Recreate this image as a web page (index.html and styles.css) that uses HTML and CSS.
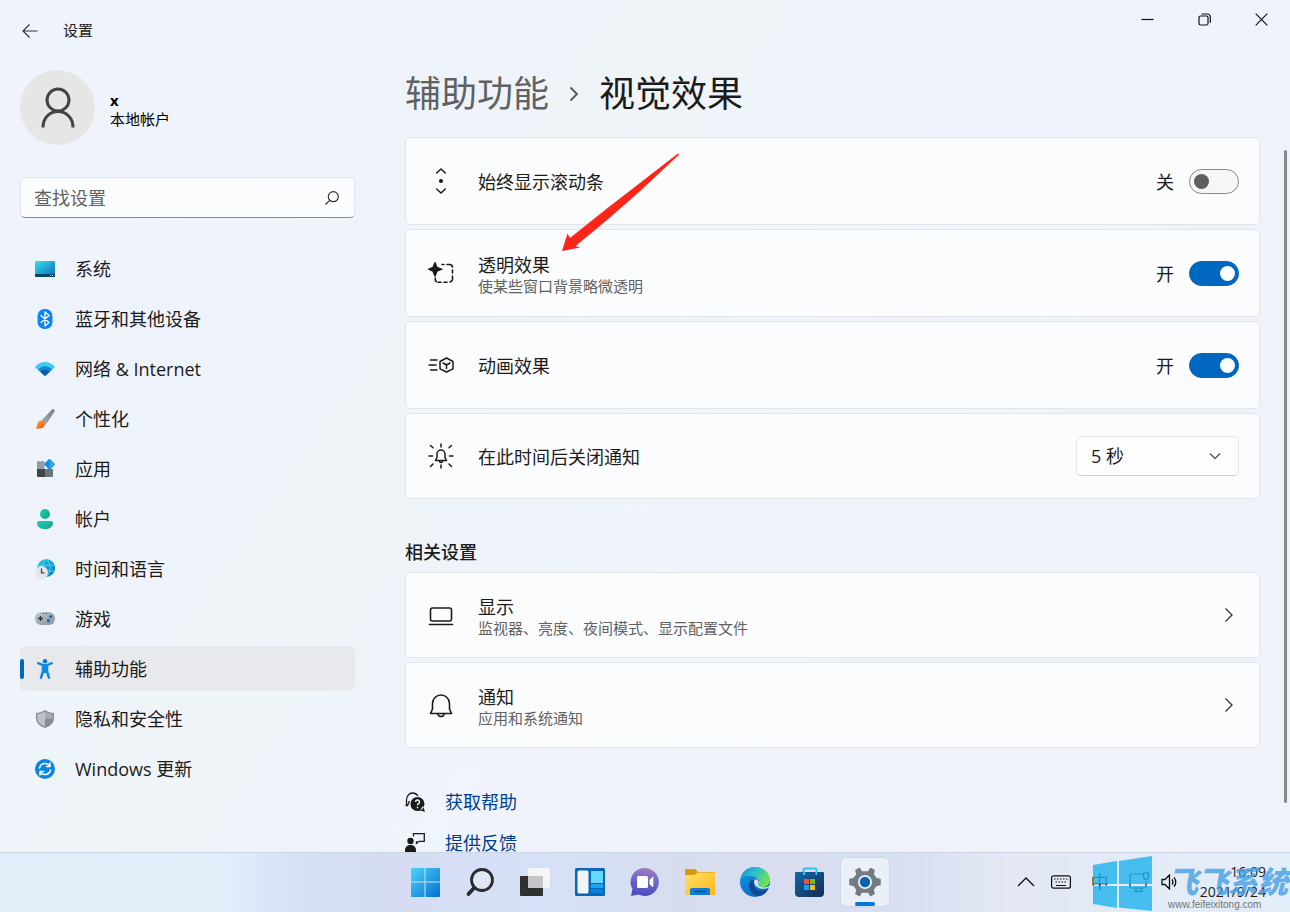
FILE: index.html
```html
<!DOCTYPE html>
<html lang="zh-CN">
<head>
    <meta charset="UTF-8">
    <meta name="viewport" content="width=device-width, initial-scale=1">
    <title>设置</title>
    <link rel="stylesheet" href="styles.css">
</head>
<body>
    <div class="window">
        <header class="titlebar">
            <button class="back-button" aria-label="返回">
                <svg width="16" height="16" viewBox="0 0 16 16" fill="none" stroke="#333" stroke-width="1.2"><path d="M15.500 8H1M7.500 1.500L1 8l6.500 6.500"/></svg>
            </button>
            <span class="app-title">设置</span>
            <div class="window-buttons">
                <button aria-label="最小化"><svg width="13" height="13" viewBox="0 0 13 13" fill="none" stroke="#111" stroke-width="1.2"><path d="M0.500 6.500h12"/></svg></button>
                <button aria-label="还原"><svg width="13" height="13" viewBox="0 0 13 13" fill="none" stroke="#111" stroke-width="1.2"><rect x="1" y="3" width="9" height="9" rx="1.500"/><path d="M3.500 1h6a2.800 2.800 0 0 1 2.800 2.800v6"/></svg></button>
                <button aria-label="关闭"><svg width="13" height="13" viewBox="0 0 13 13" stroke="#111" stroke-width="1.2"><path d="M0.700 0.700l11.600 11.600M12.300 0.700L0.700 12.300"/></svg></button>
            </div>
        </header>

        <div class="content">
            <aside class="sidebar">
                <div class="account">
                    <div class="avatar">
                        <svg width="36" height="42" viewBox="0 0 36 42" fill="none" stroke="#444" stroke-width="3"><circle cx="18" cy="13" r="11"/><path d="M3 40.500c0-9.500 6.500-16 15-16s15 6.500 15 16"/></svg>
                    </div>
                    <div class="account-text">
                        <div class="account-name">x</div>
                        <div>本地帐户</div>
                    </div>
                </div>

                <div class="search">
                    <input type="text" placeholder="查找设置" aria-label="查找设置">
                    <svg width="14" height="14" viewBox="0 0 14 14" fill="none" stroke="#333" stroke-width="1.200"><circle cx="8.300" cy="5.700" r="5"/><path d="M4.700 9.300L0.500 13.500"/></svg>
                </div>

                <nav class="nav">
                    <a href="#">
                        <svg width="20" height="20" viewBox="0 0 20 20"><defs><linearGradient id="sys" x2="1" y2="1"><stop stop-color="#3be1e6"/><stop offset="1" stop-color="#0a68c0"/></linearGradient></defs><rect y="2" width="20" height="16" rx="1.200" fill="url(#sys)"/><path d="M0 15h20v1.800a1.200 1.200 0 0 1-1.200 1.200H1.200A1.200 1.200 0 0 1 0 16.800z" fill="#0b4563"/><path d="M15 16.500h1M17 16.500h1" stroke="#bfe5f2"/></svg>
                        系统
                    </a>
                    <a href="#">
                        <svg width="20" height="20" viewBox="0 0 20 20"><rect x="2.500" width="15" height="20" rx="7" fill="#0a84ff"/><path d="M6 6.500l8 7-4 3.500V3l4 3.500-8 7" fill="none" stroke="#fff" stroke-width="1.300" stroke-linejoin="round" stroke-linecap="round"/></svg>
                        蓝牙和其他设备
                    </a>
                    <a href="#">
                        <svg width="20" height="20" viewBox="0 0 20 20"><path d="M0 8.200C5 1.400 15 1.400 20 8.200L10 17z" fill="#3dcbf2"/><path d="M3 10.700c3.500-4.500 10.500-4.500 14 0L10 17z" fill="#1787d4"/><path d="M5.500 13c2.200-3 6.800-3 9 0L10 17z" fill="#0c56a5"/></svg>
                        网络 &amp; Internet
                    </a>
                    <a href="#">
                        <svg width="20" height="20" viewBox="0 0 20 20"><defs><linearGradient id="brush" x1="1" x2="0" y2="1"><stop stop-color="#727b84"/><stop offset="1" stop-color="#a9b0b7"/></linearGradient><linearGradient id="tip" x2="1" y2="1"><stop stop-color="#ffb42e"/><stop offset="1" stop-color="#e8480c"/></linearGradient></defs><path d="M17 0.600c1.500-1 3.300.3 2.500 2L11 15.500 6.500 11.500z" fill="url(#brush)"/><path d="M6.300 11.400c2.300 0 3.900 1.800 3.600 4.200C9.500 18.600 6 20.600 0 19.300c2.100-.8 2-2 2.200-3.700.3-2.500 1.800-4.200 4.100-4.200z" fill="url(#tip)"/></svg>
                        个性化
                    </a>
                    <a href="#">
                        <svg width="20" height="20" viewBox="0 0 20 20"><path d="M2 2.200h7.500V10H2z" fill="#949ba4"/><path d="M2 10h8v8H3a1 1 0 0 1-1-1z" fill="#414549"/><path d="M10 10h8v7a1 1 0 0 1-1 1h-7z" fill="#70757a"/><rect x="10.500" y="1.200" width="8" height="8" rx="1" transform="rotate(45 14.500 5.200)" fill="#168bdd"/><path d="M14.500 0.200l4.700 4.700-5 5z" fill="#28a8ed"/></svg>
                        应用
                    </a>
                    <a href="#">
                        <svg width="20" height="20" viewBox="0 0 20 20"><defs><linearGradient id="acc" x2="1" y2="1"><stop stop-color="#26cbb7"/><stop offset="1" stop-color="#11a38b"/></linearGradient></defs><circle cx="10" cy="5" r="5" fill="url(#acc)"/><path d="M4 12h12a2 2 0 0 1 2 2c0 4-3.500 6-8 6s-8-2-8-6a2 2 0 0 1 2-2z" fill="url(#acc)"/></svg>
                        帐户
                    </a>
                    <a href="#">
                        <svg width="20" height="20" viewBox="0 0 20 20"><defs><linearGradient id="globe" x2="1" y2="1"><stop stop-color="#28cbe3"/><stop offset="1" stop-color="#0876c5"/></linearGradient></defs><circle cx="11.200" cy="9" r="8.900" fill="url(#globe)"/><path d="M3 6.300h16.500M3 12h16.500M11 0c-5 5-5 12 0 18M11.500 0c5 5 5 12 0 18" fill="none" stroke="#55dcf5" stroke-width="0.800"/><circle cx="6.500" cy="13.500" r="6.500" fill="#e4e6e9"/><path d="M6.500 9.500v4.300h3" fill="none" stroke="#444" stroke-width="1.300"/></svg>
                        时间和语言
                    </a>
                    <a href="#">
                        <svg width="20" height="20" viewBox="0 0 20 20"><defs><linearGradient id="pad" x2="1" y2="1"><stop stop-color="#c3cad0"/><stop offset="1" stop-color="#89939b"/></linearGradient></defs><rect y="3" width="20" height="13" rx="6" fill="url(#pad)"/><path d="M3 9.500h5M5.500 7v5" stroke="#333" stroke-width="1.300"/><circle cx="15.700" cy="7.600" r="1.600" fill="#0c6bc2"/><circle cx="13.300" cy="11.700" r="1.600" fill="#0c6bc2"/><path d="M8 4.500h1M11 4.500h1" stroke="#444"/></svg>
                        游戏
                    </a>
                    <a href="#" class="active" aria-current="page">
                        <svg width="20" height="20" viewBox="0 0 20 20"><g fill="none" stroke="#138bdc" stroke-linecap="round" stroke-linejoin="round"><path d="M3.200 4.200L8 6.200h4l4.800-2" stroke-width="2.400"/><path d="M8 7.500v5L6 18.600M12 7.500v5l2 6.100" stroke-width="2.600"/></g><path d="M7 6h6v7l-1.500 1h-3L7 13z" fill="#138bdc"/><circle cx="10" cy="2.300" r="2.300" fill="#0e77cb"/></svg>
                        辅助功能
                    </a>
                    <a href="#">
                        <svg width="20" height="20" viewBox="0 0 20 20"><path d="M10 1c3 2 6 2.800 9 2.800V9c0 5-4 8.300-9 10C5 17.300 1 14 1 9V3.800C4 3.800 7 3 10 1z" fill="#858c93"/><path d="M10 2.500v15C5.500 15.700 2.300 13 2.300 9V5c2.700-.1 5.200-.9 7.700-2.500z" fill="#bcc2c8"/><path d="M10 2.500v7.300h7.700V5c-2.700-.1-5.200-.9-7.700-2.500z" fill="#a4abb2"/></svg>
                        隐私和安全性
                    </a>
                    <a href="#">
                        <svg width="20" height="20" viewBox="0 0 20 20"><circle cx="10" cy="10" r="10" fill="#0b86dc"/><path d="M4.500 9A5.600 5.600 0 0 1 14.700 7M15.500 11A5.600 5.600 0 0 1 5.300 13M15 4v3.500h-3.500M5 16v-3.500h3.500" fill="none" stroke="#fff" stroke-width="1.500" stroke-linecap="round" stroke-linejoin="round"/></svg>
                        Windows 更新
                    </a>
                </nav>
            </aside>

            <main class="main">
                <h1 class="breadcrumb">
                    <a href="#">辅助功能</a>
                    <svg width="10" height="16" viewBox="0 0 10 16" fill="none" stroke="#555" stroke-width="1.800"><path d="M1.500 1.500L8 8l-6.500 6.500"/></svg>
                    <span>视觉效果</span>
                </h1>

                <section class="cards">
                    <div class="card setting">
                        <svg class="card-icon" viewBox="0 0 26 26" fill="none" stroke="#1b1b1b" stroke-width="1.500" stroke-linecap="round" stroke-linejoin="round"><path d="M8.700 5L13 1l4.300 4M8.700 21l4.300 4 4.300-4"/><circle cx="13" cy="13" r="1.300" fill="#1b1b1b"/></svg>
                        <label class="card-text" for="scrollbars">始终显示滚动条</label>
                        <span class="state">关</span>
                        <input class="toggle" type="checkbox" id="scrollbars">
                    </div>
                    <div class="card setting">
                        <svg class="card-icon" viewBox="0 0 26 26" fill="none" stroke="#1b1b1b" stroke-width="1.600" stroke-linecap="round"><path d="M7 2.500l2 4.700 5 2-5 2-2 5-2-5-4.500-2 4.500-2z" fill="#1b1b1b" stroke-width="1.200" stroke-linejoin="round"/><path d="M14 4.500h2M19 4.500h2.500a3 3 0 0 1 3 2.500M24.500 10v3M24.500 16v2.500a3 3 0 0 1-2.500 3.500M19 22.200h-3M13 22.200h-3M7.300 18v1.500a2.500 2.500 0 0 0 1 2.200"/></svg>
                        <label class="card-text" for="transparency">透明效果<small>使某些窗口背景略微透明</small></label>
                        <span class="state">开</span>
                        <input class="toggle" type="checkbox" id="transparency" checked>
                    </div>
                    <div class="card setting">
                        <svg class="card-icon" viewBox="0 0 26 26" fill="none" stroke="#1b1b1b" stroke-width="1.500" stroke-linecap="round" stroke-linejoin="round"><path d="M2.500 8H9M1 13h7M2.500 18H9"/><path d="M18.500 6l6.500 3.500v7.300L18.500 20 12 16.800V9.500zM15 11l3.500 2 3.500-2M18.500 13v3.500"/></svg>
                        <label class="card-text" for="animation">动画效果</label>
                        <span class="state">开</span>
                        <input class="toggle" type="checkbox" id="animation" checked>
                    </div>
                    <div class="card">
                        <svg class="card-icon" viewBox="0 0 26 26" fill="none" stroke="#1b1b1b" stroke-width="1.500" stroke-linecap="round" stroke-linejoin="round"><path d="M13 1v3M13 22v3M1 13h3.500M21.500 13H25M2.500 2.500l2.500 2.300M23.500 2.500L21 4.800M2.500 23.500L5 21M23.500 23.500L21 21M7.500 17.500l1.500-3V11a4 4 0 0 1 8 0v3.500l1.500 3zM11.500 18.500a1.600 1.600 0 0 0 3 0"/></svg>
                        <label class="card-text" for="dismiss">在此时间后关闭通知</label>
                        <div class="dropdown">
                            <select id="dismiss">
                                <option>5 秒</option>
                                <option>7 秒</option>
                                <option>15 秒</option>
                                <option>30 秒</option>
                            </select>
                            <svg width="12" height="8" viewBox="0 0 12 8" fill="none" stroke="#555" stroke-width="1.300"><path d="M1 1.500l5 5 5-5"/></svg>
                        </div>
                    </div>
                </section>

                <h2>相关设置</h2>
                <section class="cards">
                    <a class="card" href="#">
                        <svg class="card-icon" viewBox="0 0 26 26" fill="none" stroke="#1b1b1b" stroke-width="1.600" stroke-linecap="round"><rect x="2.500" y="6" width="21" height="13" rx="2"/><path d="M1.500 22.500h23"/></svg>
                        <span class="card-text">显示<small>监视器、亮度、夜间模式、显示配置文件</small></span>
                        <svg class="chevron" viewBox="0 0 10 16" fill="none" stroke="#333" stroke-width="1.300"><path d="M1.500 1.500L8 8l-6.500 6.500"/></svg>
                    </a>
                    <a class="card" href="#">
                        <svg class="card-icon" viewBox="0 0 26 26" fill="none" stroke="#1b1b1b" stroke-width="1.600" stroke-linejoin="round"><path d="M2.500 21.500l2-4.500v-5.500a8.500 8.500 0 0 1 17 0V17l2 4.500zM9.800 22a3.300 3.300 0 0 0 6.400 0"/></svg>
                        <span class="card-text">通知<small>应用和系统通知</small></span>
                        <svg class="chevron" viewBox="0 0 10 16" fill="none" stroke="#333" stroke-width="1.300"><path d="M1.500 1.500L8 8l-6.500 6.500"/></svg>
                    </a>
                </section>

                <div class="help-links">
                    <a href="#">
                        <svg width="20" height="20" viewBox="0 0 20 20"><path d="M1.500 13V8.500C1.500 4 4 1 7.500 1c2.500 0 4.200 1 5.500 3M0.500 13.500h2L4.500 9" fill="none" stroke="#1b1b1b" stroke-width="1.300"/><path d="M12.500 5a7 7 0 1 1-.1 14 7 7 0 0 1 .1-14zM15 18.500l5 1.300-2-6z" fill="#1b1b1b"/><path d="M10.500 10a2 2 0 1 1 3 1.700c-.7.400-1 .8-1 1.500M12.500 14.800v1.400" fill="none" stroke="#fff" stroke-width="1.400"/></svg>
                        获取帮助
                    </a>
                    <a href="#">
                        <svg width="20" height="20" viewBox="0 0 20 20"><circle cx="5.500" cy="8" r="3.200" fill="#1b1b1b"/><path d="M0 20v-3a5 5 0 0 1 5-5h1a5 5 0 0 1 5 5v3z" fill="#1b1b1b"/><path d="M8.500 3.500V0.700h10.800v7.600H14l-2.500 2v-2" fill="none" stroke="#1b1b1b" stroke-width="1.300"/></svg>
                        提供反馈
                    </a>
                </div>

                <!-- red pointer to the transparency row -->
                <svg class="pointer" width="120" height="100" viewBox="0 0 120 100"><path d="M1 99L6.500 81.500 9 86 44 58 117 1.500l1.200 1L78 40 46 68 14.500 94l4.500 1.500z" fill="#ff2418"/></svg>
            </main>

            <div class="scrollbar"></div>
        </div>
    </div>

    <footer class="taskbar">
        <div class="apps">
            <button aria-label="开始">
                <svg width="32" height="32" viewBox="0 0 32 32"><defs><linearGradient id="start" x2="1" y2="1"><stop stop-color="#4fd2fb"/><stop offset="1" stop-color="#0072cf"/></linearGradient></defs><path d="M2 3a1 1 0 0 1 1-1h12.500v13.500H2zM16.500 2H30a1 1 0 0 1 1 1v12.500H16.500zM2 16.500h13.500V31H3a1 1 0 0 1-1-1zM16.500 16.500H31V30a1 1 0 0 1-1 1H16.500z" fill="url(#start)"/></svg>
            </button>
            <button aria-label="搜索">
                <svg width="32" height="32" viewBox="0 0 32 32" fill="none" stroke="#2b2b2b"><circle cx="18" cy="14" r="10.500" fill="#e6ebf5" fill-opacity=".6" stroke-width="2.800"/><path d="M10 22l-5.500 6" stroke-width="3.800" stroke-linecap="round"/></svg>
            </button>
            <button aria-label="任务视图">
                <svg width="32" height="32" viewBox="0 0 32 32"><rect x="1" y="10" width="23" height="20" rx="1" fill="#303030"/><rect x="9" y="2" width="22" height="20" rx="1" fill="#f5f5f5"/><path d="M9 10h15v12H10a1 1 0 0 1-1-1z" fill="#c3c5c8"/></svg>
            </button>
            <button aria-label="小组件">
                <svg width="32" height="32" viewBox="0 0 32 32"><rect x="1" y="2" width="30" height="28" rx="1.500" fill="#0867b9"/><rect x="3.500" y="4.500" width="11" height="23" rx="1.500" fill="#f3f4f6"/><path d="M17 5h12v12H17z" fill="#67d7fb"/><path d="M17 18h12v4H17z" fill="#1ca4f5"/><path d="M17 23h12v4H17z" fill="#0783e5"/></svg>
            </button>
            <button aria-label="聊天">
                <svg width="32" height="32" viewBox="0 0 32 32"><defs><linearGradient id="chat" x1="0.700" y1="0" x2="0.500" y2="1"><stop stop-color="#a57db9"/><stop offset="0.450" stop-color="#6d69c8"/><stop offset="1" stop-color="#4b4cc0"/></linearGradient></defs><path d="M16 2a14 14 0 1 1-6.500 26.500L2 30l1.500-7A14 14 0 0 1 16 2z" fill="url(#chat)"/><rect x="8" y="10" width="11" height="12" rx="1.500" fill="#fff"/><path d="M20.500 14l3-3h.8v10h-.8l-3-3z" fill="#fff"/></svg>
            </button>
            <button aria-label="文件资源管理器">
                <svg width="32" height="32" viewBox="0 0 32 32"><defs><linearGradient id="folder" x2="1" y2="1"><stop stop-color="#ffdf72"/><stop offset="1" stop-color="#fbb90f"/></linearGradient></defs><path d="M1 4a1 1 0 0 1 1-1h9l3 3h16a1 1 0 0 1 1 1v10H1z" fill="#d79a0c"/><path d="M1 9h9l4-2.500h17V28a1 1 0 0 1-1 1H2a1 1 0 0 1-1-1z" fill="url(#folder)"/><path d="M6 29v-5a2 2 0 0 1 2-2h16a2 2 0 0 1 2 2v5z" fill="#117bd0"/><path d="M10 25.500h12" stroke="#0a4c8b" stroke-width="1.500"/></svg>
            </button>
            <button aria-label="Microsoft Edge">
                <svg width="32" height="32" viewBox="0 0 32 32"><defs><linearGradient id="edge-top" x2="1" y2="0.500"><stop stop-color="#148bd7"/><stop offset="0.500" stop-color="#2bc1cf"/><stop offset="1" stop-color="#6fe24e"/></linearGradient><linearGradient id="edge-low" x2="1" y2="1"><stop stop-color="#1395e5"/><stop offset="1" stop-color="#0b60b6"/></linearGradient></defs><circle cx="16" cy="16" r="15" fill="url(#edge-low)"/><path d="M1.200 14C2.500 6 8.500 1 16 1c8.700 0 15 6 15 13 0 4.500-3.500 7.300-7.500 7.300-3 0-5-1-4.500-2.300 2.200-2.600.5-7-4.500-8.500C9 9 3.500 10.500 1.200 14z" fill="url(#edge-top)"/><path d="M11 16c-3.500 7 3 14.700 10 14 3.500-1 6.500-3.500 8-7-6.500 3.700-14 1-14-5 0-2 .7-3.300 2-4.300-2.500-.3-4.800.3-6 2.300z" fill="#114a98"/><path d="M16 13.200c-2.500 3 .2 9 7 9.600 3 .2 5-.4 7-1.600l2 1V18c-2.500 3-5.500 3.700-8.500 3.300-4-.3-4.800-1.500-4-3.300.8-1.900-.8-4.800-3.500-4.800z" fill="#dce3f3"/></svg>
            </button>
            <button aria-label="Microsoft Store">
                <svg width="32" height="32" viewBox="0 0 32 32"><defs><linearGradient id="store" x2="1" y2="1"><stop stop-color="#1268ad"/><stop offset="1" stop-color="#172b52"/></linearGradient></defs><path d="M9.500 9V4a1.500 1.500 0 0 1 1.500-1.500h10A1.500 1.500 0 0 1 22.500 4v5" fill="none" stroke="#2bc3ee" stroke-width="2"/><path d="M1 7a1 1 0 0 1 1-1h27a1 1 0 0 1 1 1v20a4 4 0 0 1-4 4H5a4 4 0 0 1-4-4z" fill="url(#store)"/><path d="M9.500 6h1.500v3H9zM21.500 6H23v3h-1.500z" fill="#39d0f3"/><path d="M10 13h5v5h-5z" fill="#f4512c"/><path d="M16 13h5v5h-5z" fill="#80b90c"/><path d="M10 19h5v5h-5z" fill="#13a3ed"/><path d="M16 19h5v5h-5z" fill="#fdb913"/></svg>
            </button>
            <button class="running" aria-label="设置">
                <svg width="32" height="32" viewBox="0 0 32 32"><path d="M12.500 6L10.500 2.500 7 4.500l1 4L5 12.500l-4 1v5l4 1 3 4-1 4 3.500 2 2-3.500h7l2 3.500 3.500-2-1-4 3-4 4-1v-5l-4-1-3-4 1-4-3.500-2-2 3.500z" fill="#737b83" stroke="#737b83" stroke-width="1.500" stroke-linejoin="round"/><circle cx="16" cy="16" r="7" fill="#f0f3f8"/><circle cx="16" cy="16" r="5.200" fill="#0d61b1"/></svg>
            </button>
        </div>

        <div class="tray">
            <svg width="18" height="10" viewBox="0 0 18 10" fill="none" stroke="#111" stroke-width="1.400"><path d="M1 9l8-8 8 8"/></svg>
            <svg width="20" height="14" viewBox="0 0 20 14" fill="none" stroke="#111" stroke-width="1.200"><rect x="0.600" y="0.800" width="18.800" height="12.400" rx="2"/><path d="M3 4h1.500M6 4h1.500M9 4h1.500M12 4h1.500M15 4h1.500M4.500 7H6M7.500 7H9M10.500 7H12M13.500 7H15M5 10.500h10"/></svg>
            <span class="ime">中</span>
            <svg width="20" height="20" viewBox="0 0 20 20" fill="none" stroke="#1b1b1b" stroke-width="1.200"><path d="M13 2H2.500A1.500 1.500 0 0 0 1 3.500v11A1.500 1.500 0 0 0 2.500 16h13a1.500 1.500 0 0 0 1.500-1.500V9M7 16v3M12 16v3M5 19.300h9M14.500 1h5v4l-1.500 2.500h-2L14.500 5z"/></svg>
            <svg width="17" height="16" viewBox="0 0 17 16" fill="none" stroke="#111" stroke-width="1.300"><path d="M1 5.500v5h3L8.500 15V1L4 5.500zM11 5.500q1.800 2.500 0 5M13 3.300q3.500 4.700 0 9.400"/></svg>
            <div class="clock"><span>16:09</span><span>2021/9/24</span></div>
        </div>

        <div class="watermark">
            <svg width="60" height="56" viewBox="0 0 60 56"><path d="M1 9l24-4v23H1zM27 5l33-5v28H27zM1 30h24v22L1 48zM27 30h33v25l-33-3.500z" fill="#1fb3ee"/></svg>
            <div class="brand">
                <strong>飞飞系统</strong>
                <span>www.feifeixitong.com</span>
            </div>
        </div>
    </footer>
</body>
</html>
```
FILE: styles.css
```css
* {
    box-sizing: border-box;
}
body {
    margin: 0;
    height: 100vh;
    display: flex;
    flex-direction: column;
    overflow: hidden;
    font-family: "Open Sans", "Noto Sans CJK SC", sans-serif;
    font-size: 18px;
    line-height: 24px;
    color: #1b1b1b;
}
a {
    color: inherit;
    text-decoration: none;
}
button {
    border: none;
    background: none;
    padding: 0;
    display: flex;
    align-items: center;
    justify-content: center;
}
svg {
    flex-shrink: 0;
}

/* Settings window */
.window {
    flex: 1;
    min-height: 0;
    display: flex;
    flex-direction: column;
    background: linear-gradient(125deg, #eef3fc 15%, #eef4f8 35%, #f0f3fb 58%, #eff3f9 72%, #eff3f9);
}
.titlebar {
    display: flex;
    height: 62px;
    padding-left: 20px;
}
.back-button {
    width: 20px;
    height: 62px;
}
.app-title {
    flex: 1;
    padding-left: 23px;
    font-size: 15px;
    line-height: 60px;
}
.window-buttons {
    display: flex;
}
.window-buttons button {
    width: 57px;
    height: 38px;
}
.content {
    flex: 1;
    min-height: 0;
    display: flex;
}

/* Sidebar */
.sidebar {
    width: 335px;
    flex-shrink: 0;
    margin: 8px 50px 0 20px;
}
.account {
    display: flex;
    align-items: center;
    gap: 15px;
    font-size: 15px;
    line-height: 19px;
}
.avatar {
    width: 75px;
    height: 75px;
    border-radius: 50%;
    background: #e6e6e6;
    display: flex;
    align-items: center;
    justify-content: center;
}
.account-text {
    padding-top: 4px;
    color: #000;
}
.account-name {
    font-weight: bold;
}
.search {
    display: flex;
    align-items: center;
    height: 41px;
    margin: 32px 0 28px;
    padding: 0 15px 0 13px;
    background: #fbfcfe;
    border: 1px solid #dfe6ec;
    border-bottom-color: #868a8e;
    border-radius: 5px;
}
.search input {
    flex: 1;
    min-width: 0;
    padding: 0;
    border: none;
    outline: none;
    background: none;
    font: inherit;
}
.search input::placeholder {
    color: #5f6164;
}
.nav {
    display: flex;
    flex-direction: column;
    gap: 5px;
}
.nav a {
    display: flex;
    align-items: center;
    gap: 20px;
    height: 45px;
    padding-left: 15px;
    border-radius: 5px;
}
.nav .active {
    position: relative;
    background: #e7e9ed;
}
.nav .active::before {
    content: "";
    position: absolute;
    left: 0;
    width: 4px;
    height: 20px;
    border-radius: 2px;
    background: #0067c0;
}

/* Main column */
.main {
    position: relative;
    flex: 1;
    min-width: 0;
    overflow: hidden;
}
.breadcrumb {
    display: flex;
    align-items: center;
    gap: 20px;
    height: 64px;
    margin: 0 0 11px;
    font-size: 36px;
    font-weight: normal;
    line-height: 64px;
}
.breadcrumb a {
    color: #5f6163;
}
h2 {
    margin: 41px 0 8px;
    font-size: 18px;
    font-weight: 500;
    line-height: 24px;
}
.cards {
    display: flex;
    flex-direction: column;
    gap: 4px;
}
.card {
    display: flex;
    align-items: center;
    min-height: 86px;
    padding: 0 20px 0 22px;
    background: #fbfcfe;
    border: 1px solid #e1e6eb;
    border-radius: 5px;
}
.setting {
    min-height: 88px;
}
.card-icon {
    width: 26px;
    height: 26px;
    margin-right: 24px;
}
.card-text {
    flex: 1;
    padding-top: 1px;
}
.card-text small {
    display: block;
    font-size: 15px;
    line-height: 18px;
    color: #5f6163;
}
.chevron {
    width: 10px;
    height: 16px;
    margin-right: 5px;
}
.state {
    margin-right: 15px;
    padding-top: 1px;
}
.toggle {
    appearance: none;
    width: 50px;
    height: 25px;
    margin: 0;
    padding: 4px;
    border: 1px solid #868889;
    border-radius: 13px;
    background: #f5f6f8;
}
.toggle::before {
    content: "";
    display: block;
    width: 15px;
    height: 15px;
    border-radius: 50%;
    background: #5d5f60;
}
.toggle:checked {
    padding-right: 3px;
    border-color: #0067c0;
    background: #0067c0;
}
.toggle:checked::before {
    margin-left: auto;
    background: #fff;
}
.dropdown {
    position: relative;
    width: 163px;
}
.dropdown select {
    appearance: none;
    width: 100%;
    height: 40px;
    padding: 0 14px;
    border: 1px solid #e5e7ea;
    border-bottom-color: #c9cbce;
    border-radius: 5px;
    background: #fefefe;
    font: inherit;
    color: inherit;
}
.dropdown svg {
    position: absolute;
    right: 18px;
    top: 16px;
    pointer-events: none;
}
.help-links {
    display: flex;
    flex-direction: column;
    gap: 17px;
    margin-top: 42px;
    color: #003e92;
}
.help-links a {
    display: flex;
    align-items: center;
    gap: 20px;
}
.pointer {
    position: absolute;
    left: 156px;
    top: 90px;
}
.scrollbar {
    width: 3px;
    margin: 88px 3px 49px 24px;
    border-radius: 2px;
    background: #868a8e;
}

/* Taskbar */
.taskbar {
    position: relative;
    display: grid;
    grid-template-columns: 1fr auto 1fr;
    align-items: center;
    height: 60px;
    padding-bottom: 2px;
    border-top: 1px solid #ccd5e4;
    background: linear-gradient(90deg, #e1edf9, #e2eef9 17%, #d5e1f6 23%, #d5dcf2 30%, #d5e1f8 42%, #d8ddee 52%, #d8dff1 70%, #e3e8f3 78%, #e3eefa);
}
.apps {
    grid-column: 2;
    display: flex;
    gap: 7px;
}
.apps button {
    width: 48px;
    height: 48px;
    border-radius: 5px;
}
.apps .running {
    position: relative;
    background: #ebeff8;
    box-shadow: 0 0 1px 1px #d0d6e4;
}
.running::after {
    content: "";
    position: absolute;
    bottom: 0;
    width: 20px;
    height: 4px;
    border-radius: 2px;
    background: #0078d4;
}
.tray {
    justify-self: end;
    display: flex;
    align-items: center;
    gap: 12px;
    padding-right: 24px;
}
.tray svg:first-child {
    margin-right: 4px;
}
.ime {
    margin: 0 8px;
}
.clock {
    display: flex;
    flex-direction: column;
    align-items: flex-end;
    margin-left: 10px;
    font-size: 14px;
    line-height: 20px;
}
.watermark {
    position: absolute;
    right: 0;
    bottom: 0;
    display: flex;
    gap: 16px;
    opacity: 0.8;
    pointer-events: none;
}
.brand {
    width: 122px;
    padding-top: 10px;
    white-space: nowrap;
}
.brand strong {
    display: block;
    font-size: 30px;
    font-style: italic;
    font-weight: 900;
    line-height: 32px;
    color: #46a0e4;
}
.brand span {
    display: block;
    font-family: "Liberation Sans", sans-serif;
    font-size: 10px;
    line-height: 14px;
    color: #555;
}
```
